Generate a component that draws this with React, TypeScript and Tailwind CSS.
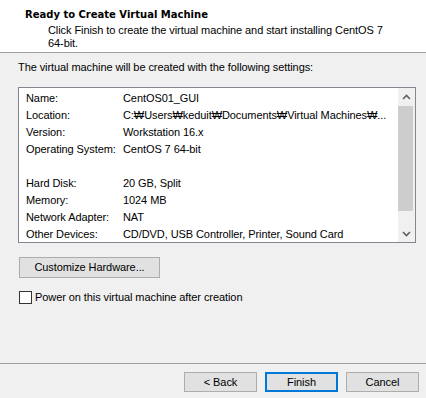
import React from "react";

const rows: [string, string][] = [
  ["Name:", "CentOS01_GUI"],
  ["Location:", "C:₩Users₩keduit₩Documents₩Virtual Machines₩..."],
  ["Version:", "Workstation 16.x"],
  ["Operating System:", "CentOS 7 64-bit"],
  ["", ""],
  ["Hard Disk:", "20 GB, Split"],
  ["Memory:", "1024 MB"],
  ["Network Adapter:", "NAT"],
  ["Other Devices:", "CD/DVD, USB Controller, Printer, Sound Card"],
];

export default function App() {
  return (
    <div
      className="w-[426px] h-[398px] bg-[#f0f0f0] flex flex-col text-[11px] tracking-[-0.08px] text-black overflow-hidden"
      style={{ fontFamily: '"Liberation Sans", Arial, sans-serif' }}
    >
      {/* Header */}
      <div className="h-[53px] bg-white border-b border-[#a0a0a0] shrink-0">
        <div
          className="pl-[25px] pt-[9px] leading-[12px] text-[10px] font-bold tracking-normal"
          style={{ fontFamily: '"DejaVu Sans", sans-serif' }}
        >
          Ready to Create Virtual Machine
        </div>
        <div className="pl-[48px] mt-[3px] leading-[13px]">
          Click Finish to create the virtual machine and start installing CentOS 7
          <br />
          64-bit.
        </div>
      </div>

      <div className="pl-[18px] mt-[8px] leading-[13px]">
        The virtual machine will be created with the following settings:
      </div>

      {/* List box */}
      <div className="ml-[18px] mt-[13px] w-[398px] h-[156px] border border-[#828790] bg-white flex overflow-hidden shrink-0">
        <div className="flex-1 pt-[2px] pl-[7px] overflow-hidden">
          {rows.map(([k, v], i) => (
            <div key={i} className="flex h-[17px] leading-[17px] whitespace-nowrap">
              <div className="w-[97px] shrink-0">{k}</div>
              <div>{v}</div>
            </div>
          ))}
        </div>
        <div className="w-[17px] h-full bg-[#f0f0f0] flex flex-col shrink-0">
          <div className="h-[17px] flex items-center justify-center">
            <svg width="9" height="6" viewBox="0 0 9 6">
              <path d="M1 5 L4.5 1.5 L8 5" fill="none" stroke="#606060" strokeWidth="1.6" />
            </svg>
          </div>
          <div className="mt-[1px] w-[15px] h-[105px] bg-[#cdcdcd]" />
          <div className="flex-1" />
          <div className="h-[17px] flex items-center justify-center">
            <svg width="9" height="6" viewBox="0 0 9 6">
              <path d="M1 1 L4.5 4.5 L8 1" fill="none" stroke="#606060" strokeWidth="1.6" />
            </svg>
          </div>
        </div>
      </div>

      {/* Customize Hardware */}
      <div className="ml-[19px] mt-[14px] w-[141px] h-[21px] border border-[#adadad] bg-[#e1e1e1] flex items-center justify-center shrink-0">
        Customize Hardware...
      </div>

      {/* Checkbox */}
      <div className="ml-[19px] mt-[13px] flex items-center h-[13px] shrink-0">
        <div className="w-[13px] h-[13px] border border-[#333333] bg-white shrink-0" />
        <span className="ml-[3px] leading-[13px]">Power on this virtual machine after creation</span>
      </div>

      <div className="flex-1" />

      {/* Bottom buttons */}
      <div className="border-t border-[#a0a0a0] pt-[8px] pb-[6px] pr-[7px] flex justify-end gap-[8px] shrink-0">
        <div className="w-[73px] h-[20px] border border-[#adadad] bg-[#e1e1e1] flex items-center justify-center">
          &lt; Back
        </div>
        <div className="w-[73px] h-[20px] border-2 border-[#0078d7] bg-[#e1e1e1] flex items-center justify-center">
          Finish
        </div>
        <div className="w-[73px] h-[20px] border border-[#adadad] bg-[#e1e1e1] flex items-center justify-center">
          Cancel
        </div>
      </div>
    </div>
  );
}
